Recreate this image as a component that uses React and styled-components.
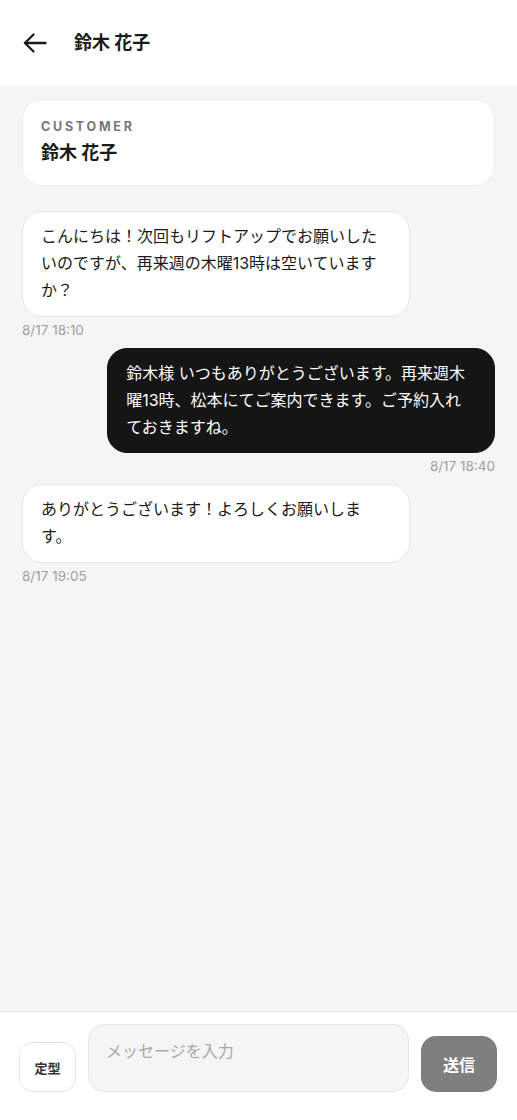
import React from 'react';
import styled, { createGlobalStyle } from 'styled-components';

const messages = [
  { id: 1, from: 'customer', text: 'こんにちは！次回もリフトアップでお願いしたいのですが、再来週の木曜13時は空いていますか？', time: '8/17 18:10' },
  { id: 2, from: 'staff', text: '鈴木様 いつもありがとうございます。再来週木曜13時、松本にてご案内できます。ご予約入れておきますね。', time: '8/17 18:40' },
  { id: 3, from: 'customer', text: 'ありがとうございます！よろしくお願いします。', time: '8/17 19:05' },
];

const App = () => {
  return (
    <Screen>
      <GlobalStyle />
      <Header>
        <BackButton aria-label="戻る">
          <svg width="24" height="20" viewBox="0 0 24 20" fill="none" stroke="#1a1a1a" strokeWidth="2.3" strokeLinecap="round" strokeLinejoin="round">
            <path d="M22.5 10H2" />
            <path d="M10.5 1.5L2 10l8.5 8.5" />
          </svg>
        </BackButton>
        <Title>鈴木 花子</Title>
      </Header>

      <Thread>
        <CustomerCard>
          <CardLabel>CUSTOMER</CardLabel>
          <CardName>鈴木 花子</CardName>
        </CustomerCard>

        {messages.map((m) => (
          <MessageGroup key={m.id} $mine={m.from === 'staff'}>
            <Bubble $mine={m.from === 'staff'}>{m.text}</Bubble>
            <Time>{m.time}</Time>
          </MessageGroup>
        ))}
      </Thread>

      <Composer>
        <TemplateButton>定型</TemplateButton>
        <Input placeholder="メッセージを入力" />
        <SendButton>送信</SendButton>
      </Composer>
    </Screen>
  );
};

export default App;

const GlobalStyle = createGlobalStyle`
  * { box-sizing: border-box; }
  body {
    margin: 0;
    background: #f5f5f5;
    font-family: Inter, 'Noto Sans CJK JP', sans-serif;
    color: #1a1a1a;
    -webkit-font-smoothing: antialiased;
  }
`;

const Screen = styled.div`
  display: flex;
  flex-direction: column;
  height: 100vh;
  background: #f5f5f5;
`;

const Header = styled.header`
  display: flex;
  align-items: center;
  gap: 27px;
  height: 85px;
  padding: 0 23px;
  background: #fff;
  flex-shrink: 0;
`;

const BackButton = styled.button`
  display: flex;
  align-items: center;
  padding: 0;
  border: none;
  background: none;
`;

const Title = styled.h1`
  margin: 0;
  font-size: 18px;
  font-weight: 700;
  line-height: 26px;
`;

const Thread = styled.main`
  flex: 1;
  display: flex;
  flex-direction: column;
  padding: 14px 22px;
  overflow: hidden;
`;

const CustomerCard = styled.section`
  padding: 19px 18px;
  margin-bottom: 25px;
  background: #fff;
  border: 1px solid #ececec;
  border-radius: 20px;
`;

const CardLabel = styled.div`
  font-size: 12.5px;
  font-weight: 700;
  line-height: 16px;
  letter-spacing: 0.22em;
  color: #777;
  margin-bottom: 5px;
`;

const CardName = styled.div`
  font-size: 18px;
  font-weight: 700;
  line-height: 26px;
`;

const MessageGroup = styled.div`
  display: flex;
  flex-direction: column;
  align-items: ${(p) => (p.$mine ? 'flex-end' : 'flex-start')};
  margin-bottom: 10px;
`;

const Bubble = styled.div`
  max-width: 82%;
  padding: 11px 18px;
  font-size: 16px;
  line-height: 27.2px;
  border-radius: 20px;
  background: ${(p) => (p.$mine ? '#151515' : '#fff')};
  color: ${(p) => (p.$mine ? '#fff' : '#1a1a1a')};
  border: 1px solid ${(p) => (p.$mine ? '#151515' : '#e6e6e6')};
`;

const Time = styled.div`
  margin-top: 5px;
  font-size: 13.5px;
  line-height: 16px;
  color: #a0a0a0;
`;

const Composer = styled.footer`
  display: flex;
  align-items: flex-end;
  gap: 12px;
  padding: 12px 20px 28px 19px;
  background: #fff;
  border-top: 1px solid #e6e6e6;
  flex-shrink: 0;
`;

const TemplateButton = styled.button`
  width: 57px;
  height: 50px;
  flex-shrink: 0;
  border: 1px solid #e3e3e3;
  border-radius: 14px;
  background: #fff;
  font-family: inherit;
  font-size: 13px;
  font-weight: 700;
  color: #333;
`;

const Input = styled.textarea`
  flex: 1;
  height: 68px;
  padding: 14px 17px;
  border: 1px solid #e6e6e6;
  border-radius: 16px;
  background: #f5f5f5;
  resize: none;
  font-family: inherit;
  font-size: 16px;
  line-height: 24px;
  color: #1a1a1a;
  &::placeholder { color: #a8a8a8; }
`;

const SendButton = styled.button`
  width: 76px;
  height: 56px;
  flex-shrink: 0;
  border: none;
  border-radius: 15px;
  background: #7f7f7f;
  font-family: inherit;
  font-size: 16px;
  font-weight: 700;
  color: #fff;
`;
